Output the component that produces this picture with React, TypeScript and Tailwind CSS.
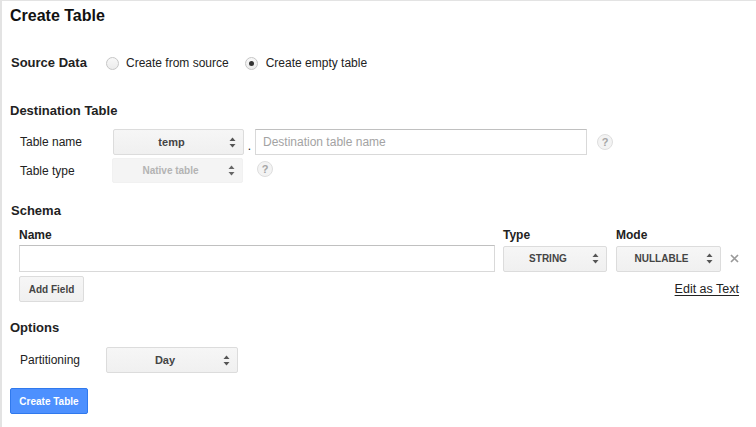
import React from 'react';

function Arrows({ className = 'text-[#555]' }: { className?: string }) {
  return (
    <svg width="7" height="11" viewBox="0 0 7 11" className={className}>
      <path d="M3.5 0.5 L6.5 4 L0.5 4 Z" fill="currentColor" />
      <path d="M0.5 7 L6.5 7 L3.5 10.5 Z" fill="currentColor" />
    </svg>
  );
}

function Select({
  value,
  className,
  disabled = false,
  textSize = 'text-[11px]',
}: {
  value: string;
  className: string;
  disabled?: boolean;
  textSize?: string;
}) {
  return (
    <div
      className={
        'flex items-center rounded-[2px] pr-[7px] ' +
        (disabled
          ? 'bg-[#f4f4f4] border border-[#f1f1f1] text-[#b3b3b3] '
          : 'bg-gradient-to-b from-[#f6f6f6] to-[#f0f0f0] border border-[#dcdcdc] text-[#444] ') +
        className
      }
    >
      <span className={'flex-1 text-center font-bold ' + textSize}>{value}</span>
      <Arrows className={disabled ? 'text-[#666]' : 'text-[#555]'} />
    </div>
  );
}

function Help() {
  return (
    <div className="flex h-[16px] w-[16px] items-center justify-center rounded-full border border-[#dedede] bg-[#f3f3f3] text-[11px] font-bold text-[#a5a5a5]">
      ?
    </div>
  );
}

function Radio({ checked }: { checked?: boolean }) {
  return (
    <div className="flex h-[13px] w-[13px] items-center justify-center rounded-full border border-[#c6c6c6] bg-gradient-to-b from-[#f8f8f8] to-[#ececec]">
      {checked && <div className="h-[5px] w-[5px] rounded-full bg-[#333]" />}
    </div>
  );
}

export default function App() {
  return (
    <div
      className="h-[427px] w-[756px] overflow-hidden border-l-[2px] border-t border-[#e3e3e3] bg-white pl-[8px] text-[12px] text-[#222]"
      style={{ fontFamily: '"Liberation Sans", Arial, sans-serif' }}
    >
      <h1 className="mt-[5px] h-[20px] text-[16px] font-bold leading-[20px] text-[#111]">Create Table</h1>

      {/* Source data */}
      <div className="mt-[27px] flex h-[20px] items-center">
        <div className="w-[96px] pl-[1px] text-[13px] font-bold">Source Data</div>
        <Radio />
        <span className="ml-[7px] mr-[16px]">Create from source</span>
        <Radio checked />
        <span className="ml-[8px]">Create empty table</span>
      </div>

      {/* Destination table */}
      <div className="mt-[28px] h-[20px] text-[13px] font-bold leading-[20px]">Destination Table</div>
      <div className="pl-[10px]">
        <div className="mt-[8px] flex h-[26px] items-center">
          <div className="w-[93px]">Table name</div>
          <Select value="temp" className="h-[26px] w-[131px]" />
          <span className="w-[11px] self-end pb-[3px] text-center text-[12px] leading-none">.</span>
          <input
            placeholder="Destination table name"
            className="h-[26px] w-[332px] border border-[#d9d9d9] border-t-[#c0c0c0] px-[7px] text-[12px] outline-none placeholder:text-[#a3a3a3]"
          />
          <div className="ml-[10px]">
            <Help />
          </div>
        </div>
        <div className="mt-[3px] flex h-[25px] items-center">
          <div className="w-[92px]">Table type</div>
          <Select value="Native table" disabled textSize="text-[10px]" className="h-[25px] w-[131px]" />
          <div className="mb-[3px] ml-[14px]">
            <Help />
          </div>
        </div>
      </div>

      {/* Schema */}
      <div className="mt-[18px] h-[20px] pl-[1px] text-[13px] font-bold leading-[20px]">Schema</div>
      <div className="w-[729px] pl-[9px]">
        <div className="mt-[6px] flex h-[16px] items-center text-[12px] font-bold">
          <div className="w-[484px]">Name</div>
          <div className="w-[113px]">Type</div>
          <div>Mode</div>
        </div>
        <div className="mt-[2px] flex h-[27px] items-center">
          <input className="h-[27px] w-[476px] border border-[#d9d9d9] border-t-[#c0c0c0] px-[7px] outline-none" />
          <Select value="STRING" textSize="text-[10px]" className="ml-[8px] h-[26px] w-[104px]" />
          <Select value="NULLABLE" textSize="text-[10px]" className="ml-[9px] h-[26px] w-[105px]" />
          <svg width="9" height="9" viewBox="0 0 9 9" className="ml-[9px] text-[#9a9a9a]">
            <path d="M1 1 L8 8 M8 1 L1 8" stroke="currentColor" strokeWidth="1.7" />
          </svg>
        </div>
        <div className="mt-[4px] flex h-[26px] items-center justify-between">
          <button className="h-[26px] w-[65px] rounded-[2px] border border-[#dcdcdc] bg-gradient-to-b from-[#f6f6f6] to-[#f0f0f0] text-[10px] font-bold text-[#444]">
            Add Field
          </button>
          <a className="mt-[1px] text-[12.5px] text-[#222] underline underline-offset-[2px]">Edit as Text</a>
        </div>
      </div>

      {/* Options */}
      <div className="mt-[16px] h-[20px] text-[13px] font-bold leading-[20px]">Options</div>
      <div className="mt-[9px] flex h-[26px] items-center pl-[10px]">
        <div className="w-[86px]">Partitioning</div>
        <Select value="Day" className="h-[26px] w-[132px]" />
      </div>

      <button className="mt-[15px] h-[26px] w-[78px] rounded-[2px] border border-[#3079ed] bg-[#4d90fe] text-[10px] font-bold text-white">
        Create Table
      </button>
    </div>
  );
}
